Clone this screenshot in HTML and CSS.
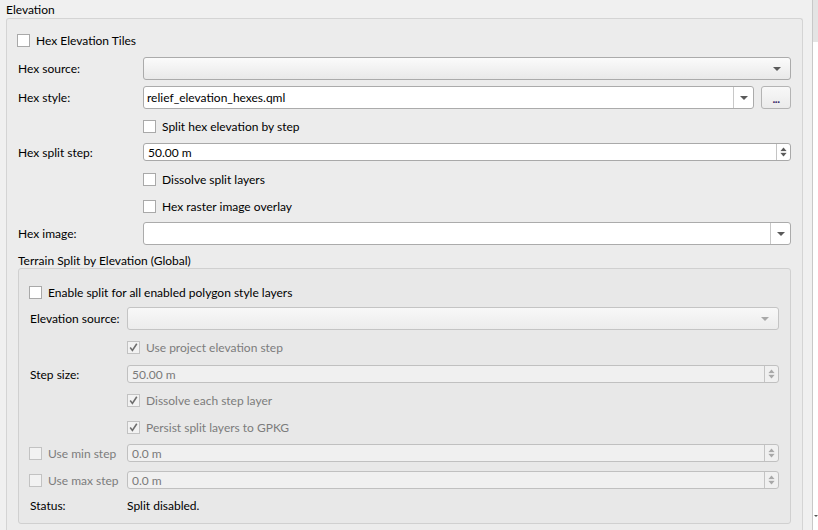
FILE: index.html
```html
<!DOCTYPE html>
<html>
<head>
<meta charset="utf-8">
<link rel="stylesheet" href="styles.css">
</head>
<body>
<div class="page">
  <div class="main">
    <div class="gb-title">Elevation</div>
    <div class="group">
      <div class="row r1"><label class="chk"><span class="box"></span><span>Hex Elevation Tiles</span></label></div>
      <div class="row r2"><span class="lbl">Hex source:</span>
        <div class="combo ro"><span class="ctext"></span><span class="arrow"><svg width="8" height="4" viewBox="0 0 8 4"><polygon points="0,0 8,0 4,4" fill="#5a5a5a"/></svg></span></div>
      </div>
      <div class="row r3"><span class="lbl">Hex style:</span>
        <div class="combo ed"><span class="ctext">relief_elevation_hexes.qml</span><span class="cbtn"><svg width="8" height="4" viewBox="0 0 8 4"><polygon points="0,0 8,0 4,4" fill="#5a5a5a"/></svg></span></div>
        <div class="btn">...</div>
      </div>
      <div class="row r4 ind"><label class="chk"><span class="box"></span><span>Split hex elevation by step</span></label></div>
      <div class="row r5"><span class="lbl">Hex split step:</span>
        <div class="spin"><span class="ctext">50.00 m</span><span class="sbtn"><svg width="9" height="12" viewBox="0 0 9 12"><polygon points="1.5,5 7.5,5 4.5,1.5" fill="#5a5a5a"/><rect x="1.5" y="5.8" width="6" height="0.5" fill="#aaa"/><polygon points="1.5,7 7.5,7 4.5,10.5" fill="#5a5a5a"/></svg></span></div>
      </div>
      <div class="row r6 ind"><label class="chk"><span class="box"></span><span>Dissolve split layers</span></label></div>
      <div class="row r7 ind"><label class="chk"><span class="box"></span><span>Hex raster image overlay</span></label></div>
      <div class="row r8"><span class="lbl">Hex image:</span>
        <div class="combo ed"><span class="ctext"></span><span class="cbtn"><svg width="8" height="4" viewBox="0 0 8 4"><polygon points="0,0 8,0 4,4" fill="#5a5a5a"/></svg></span></div>
      </div>
      <div class="row r9 sub-title">Terrain Split by Elevation (Global)</div>
      <div class="group2">
        <div class="row q1"><label class="chk"><span class="box"></span><span>Enable split for all enabled polygon style layers</span></label></div>
        <div class="row q2"><span class="lbl2">Elevation source:</span>
          <div class="combo ro dis"><span class="ctext"></span><span class="arrow"><svg width="8" height="4" viewBox="0 0 8 4"><polygon points="0,0 8,0 4,4" fill="#a8a8a8"/></svg></span></div>
        </div>
        <div class="row q3 ind2"><label class="chk dis"><span class="box checked"><svg width="11" height="11" viewBox="0 0 11 11"><path d="M2.2 5.6 L4.4 8.4 L8.8 1.8" fill="none" stroke="#6e6e6e" stroke-width="1.6"/></svg></span><span>Use project elevation step</span></label></div>
        <div class="row q4"><span class="lbl2">Step size:</span>
          <div class="spin dis"><span class="ctext">50.00 m</span><span class="sbtn"><svg width="9" height="12" viewBox="0 0 9 12"><polygon points="1.5,5 7.5,5 4.5,1.5" fill="#a8a8a8"/><rect x="1.5" y="5.8" width="6" height="0.5" fill="#c8c8c8"/><polygon points="1.5,7 7.5,7 4.5,10.5" fill="#a8a8a8"/></svg></span></div>
        </div>
        <div class="row q5 ind2"><label class="chk dis"><span class="box checked"><svg width="11" height="11" viewBox="0 0 11 11"><path d="M2.2 5.6 L4.4 8.4 L8.8 1.8" fill="none" stroke="#6e6e6e" stroke-width="1.6"/></svg></span><span>Dissolve each step layer</span></label></div>
        <div class="row q6 ind2"><label class="chk dis"><span class="box checked"><svg width="11" height="11" viewBox="0 0 11 11"><path d="M2.2 5.6 L4.4 8.4 L8.8 1.8" fill="none" stroke="#6e6e6e" stroke-width="1.6"/></svg></span><span>Persist split layers to GPKG</span></label></div>
        <div class="row q7"><label class="chk dis lbl2c"><span class="box"></span><span>Use min step</span></label>
          <div class="spin dis"><span class="ctext">0.0 m</span><span class="sbtn"><svg width="9" height="12" viewBox="0 0 9 12"><polygon points="1.5,5 7.5,5 4.5,1.5" fill="#a8a8a8"/><rect x="1.5" y="5.8" width="6" height="0.5" fill="#c8c8c8"/><polygon points="1.5,7 7.5,7 4.5,10.5" fill="#a8a8a8"/></svg></span></div>
        </div>
        <div class="row q8"><label class="chk dis lbl2c"><span class="box"></span><span>Use max step</span></label>
          <div class="spin dis"><span class="ctext">0.0 m</span><span class="sbtn"><svg width="9" height="12" viewBox="0 0 9 12"><polygon points="1.5,5 7.5,5 4.5,1.5" fill="#a8a8a8"/><rect x="1.5" y="5.8" width="6" height="0.5" fill="#c8c8c8"/><polygon points="1.5,7 7.5,7 4.5,10.5" fill="#a8a8a8"/></svg></span></div>
        </div>
        <div class="row q9"><span class="lbl2">Status:</span><span>Split disabled.</span></div>
      </div>
    </div>
  </div>
  <div class="vline"></div>
  <div class="side">
    <div class="side-top"></div>
    <div class="side-body"><span class="side-arrow"></span></div>
  </div>
</div>
</body>
</html>
```

FILE: styles.css
```css
html, body {
  margin: 0;
  padding: 0;
}
body {
  background: #f0f0f0;
  font-family: Lato, "Open Sans", sans-serif;
  font-size: 12px;
  color: #000;
  width: 818px;
  height: 530px;
  overflow: hidden;
}
.page {
  display: flex;
  height: 530px;
  overflow: hidden;
}
.main {
  width: 812px;
  box-sizing: border-box;
  padding: 0 9px 0 6px;
  display: flex;
  flex-direction: column;
}
.gb-title {
  height: 18px;
  line-height: 18px;
  margin-top: 1px;
  margin-bottom: -1px;
  flex: none;
}
.group {
  flex: 1;
  border: 1px solid #d4d4d4;
  border-bottom: none;
  border-radius: 3px 3px 0 0;
  background: #ececec;
  padding: 8px 11px 0 11px;
  display: flex;
  flex-direction: column;
}
.row {
  display: flex;
  align-items: center;
  flex: none;
}
.lbl {
  width: 125px;
  flex: none;
}
.lbl2 {
  width: 97px;
  flex: none;
}
.lbl2c {
  width: 98px;
  flex: none;
  margin-left: -1px;
}
.ind { padding-left: 125px; }
.ind2 { padding-left: 97px; }

.r1 { height: 26px; }
.r1 .chk { margin-left: -1px; }
.r2 { height: 23px; margin-top: 4px; }
.r3 { height: 23px; margin-top: 6px; }
.r4 { height: 26px; margin-top: 4px; }
.r5 { height: 18px; margin-top: 4px; }
.r6 { height: 26px; margin-top: 5px; }
.r7 { height: 26px; margin-top: 1px; }
.r8 { height: 23px; margin-top: 3px; }
.r9 { height: 17px; margin-top: 7px; margin-bottom: -1px; }

.chk {
  display: flex;
  align-items: center;
  gap: 6px;
}
.box {
  width: 11px;
  height: 11px;
  border: 1px solid #a9a9a9;
  background: #fff;
  flex: none;
  display: flex;
  align-items: center;
  justify-content: center;
}
.box svg { display: block; }
.chk.dis { color: #7c7c7c; }
.chk.dis .box {
  border-color: #c2c2c2;
  background: #f2f2f2;
}

.combo {
  flex: 1;
  height: 100%;
  box-sizing: border-box;
  border: 1px solid #ababab;
  border-radius: 3px;
  display: flex;
  align-items: center;
}
.combo.ro {
  background: linear-gradient(#fbfbfb, #e9e9e9);
}
.combo.ed {
  background: #fff;
}
.combo.dis {
  border-color: #c4c4c4;
  background: linear-gradient(#f8f8f8, #ececec);
}
.ctext {
  flex: 1;
  padding-left: 3px;
  white-space: nowrap;
}
.arrow {
  width: 20px;
  display: flex;
  justify-content: center;
  align-items: center;
  margin-right: 3px;
}
.arrow svg, .cbtn svg, .sbtn svg { display: block; }
.cbtn {
  width: 19px;
  height: 100%;
  border-left: 1px solid #c8c8c8;
  display: flex;
  align-items: center;
  justify-content: center;
}
.btn {
  width: 30px;
  height: 100%;
  box-sizing: border-box;
  margin-left: 7px;
  border: 1px solid #b4b4b4;
  border-radius: 3px;
  background: linear-gradient(#f8f8f8, #ebebeb);
  display: flex;
  align-items: center;
  justify-content: center;
  color: #3a2a6a;
  font-size: 12px;
  font-weight: bold;
  letter-spacing: -0.5px;
  padding-top: 2px;
}
.spin {
  flex: 1;
  height: 100%;
  box-sizing: border-box;
  border: 1px solid #a9a9a9;
  border-radius: 3px;
  background: #fff;
  display: flex;
  align-items: center;
}
.spin .ctext { padding-left: 4px; }
.spin.dis {
  border-color: #c0c0c0;
  background: #f0f0f0;
  color: #7a7a7a;
}
.sbtn {
  width: 13px;
  height: 100%;
  border-left: 1px solid #c4c4c4;
  display: flex;
  align-items: center;
  justify-content: center;
}

.sub-title {
  line-height: 17px;
}
.group2 {
  height: 256px;
  box-sizing: border-box;
  border: 1px solid #d0d0d0;
  border-radius: 3px;
  background: #e8e8e8;
  padding: 10px 11px 0 11px;
  display: flex;
  flex-direction: column;
  flex: none;
}
.q1 { height: 26px; }
.q1 .chk { margin-left: -1px; }
.q2 { height: 23px; margin-top: 2px; }
.q3 { height: 26px; margin-top: 4px; }
.q4 { height: 18px; margin-top: 5px; }
.q5 { height: 26px; margin-top: 4px; }
.q6 { height: 26px; margin-top: 1px; }
.q7 { height: 18px; margin-top: 4px; }
.q8 { height: 18px; margin-top: 9px; }
.q9 { height: 20px; margin-top: 6px; }

.vline {
  width: 1px;
  background: #c8c8c8;
  flex: none;
}
.side {
  width: 5px;
  flex: none;
  display: flex;
  flex-direction: column;
}
.side-top {
  height: 42px;
  background: #e4e4e4;
}
.side-body {
  flex: 1;
  background: #fff;
  position: relative;
}
.side-arrow {
  position: absolute;
  left: 1px;
  top: 473px;
  width: 0;
  height: 0;
  border-left: 2px solid transparent;
  border-right: 2px solid transparent;
  border-top: 2px solid #555;
}
```
